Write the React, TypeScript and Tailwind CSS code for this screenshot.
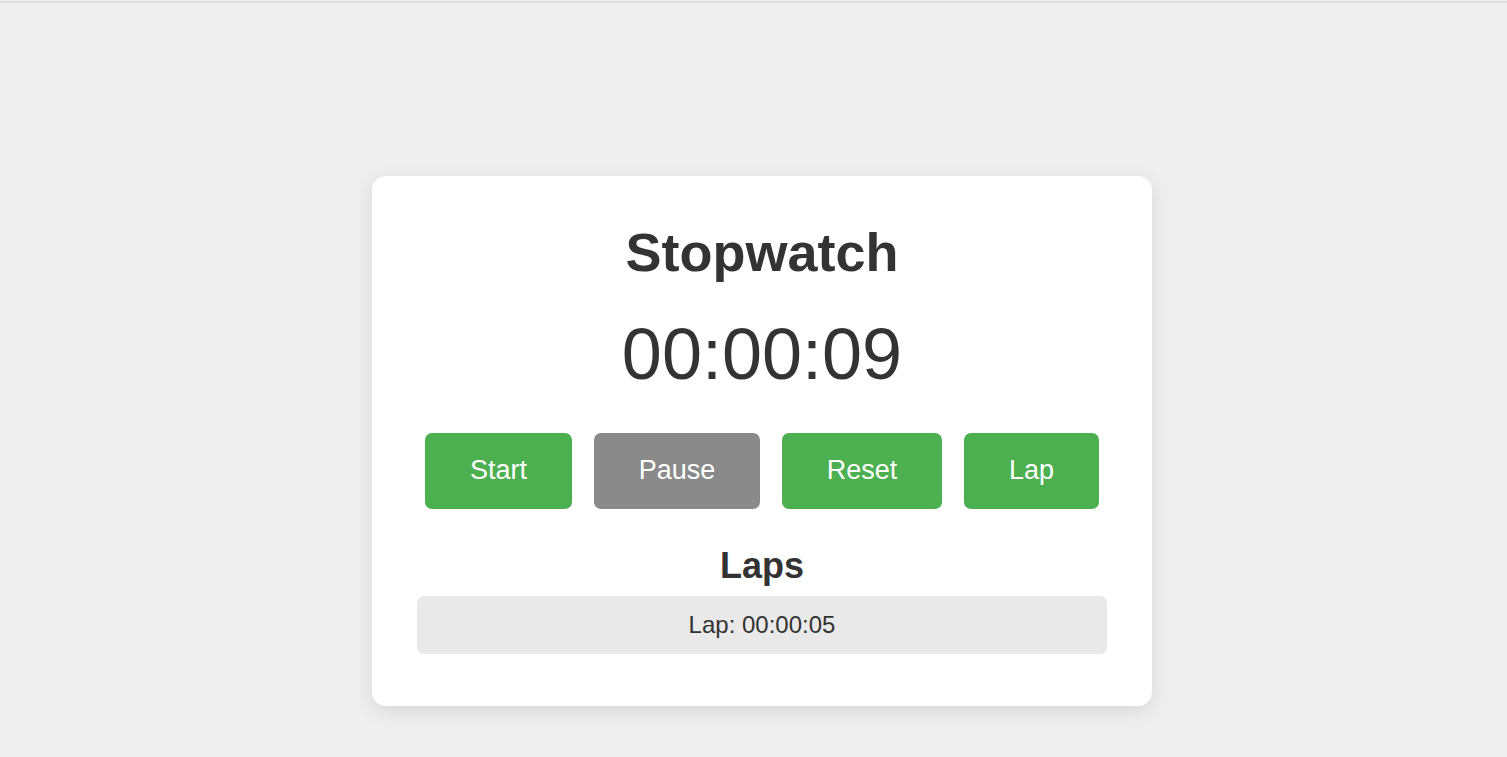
export default function App() {
  const buttons = [
    { label: "Start", w: "w-[147px]", bg: "bg-[#4caf50]" },
    { label: "Pause", w: "w-[166px]", bg: "bg-[#8a8a8a]" },
    { label: "Reset", w: "w-[160px]", bg: "bg-[#4caf50]" },
    { label: "Lap", w: "w-[135px]", bg: "bg-[#4caf50]" },
  ];

  return (
    <div className="min-h-screen bg-[#efefef] font-['Liberation_Sans',Arial,sans-serif] text-[#333]">
      <div className="h-[3px] border-b-2 border-[#e0e0e0]" />
      <div className="flex justify-center pl-[17px] pt-[173px]">
        <div className="w-[780px] rounded-[14px] bg-white px-[45px] pt-[45px] pb-[52px] shadow-[0_5px_20px_rgba(0,0,0,0.1)] flex flex-col items-center">
          <h1 className="text-[54px] font-bold leading-[62px]">Stopwatch</h1>
          <div className="mt-[30px] text-[72px] leading-[83px]">00:00:09</div>
          <div className="mt-[37px] flex gap-[22px]">
            {buttons.map((b) => (
              <button
                key={b.label}
                className={`${b.w} ${b.bg} rounded-[7px] pt-[22px] pb-[23px] text-[27px] leading-[31px] text-white`}
              >
                {b.label}
              </button>
            ))}
          </div>
          <h2 className="mt-[36px] text-[36px] font-bold leading-[41px]">Laps</h2>
          <ul className="mt-[10px] w-full">
            <li className="rounded-[7px] bg-[#e9e9e9] py-[15px] text-center text-[24px] leading-[28px]">
              Lap: 00:00:05
            </li>
          </ul>
        </div>
      </div>
    </div>
  );
}
